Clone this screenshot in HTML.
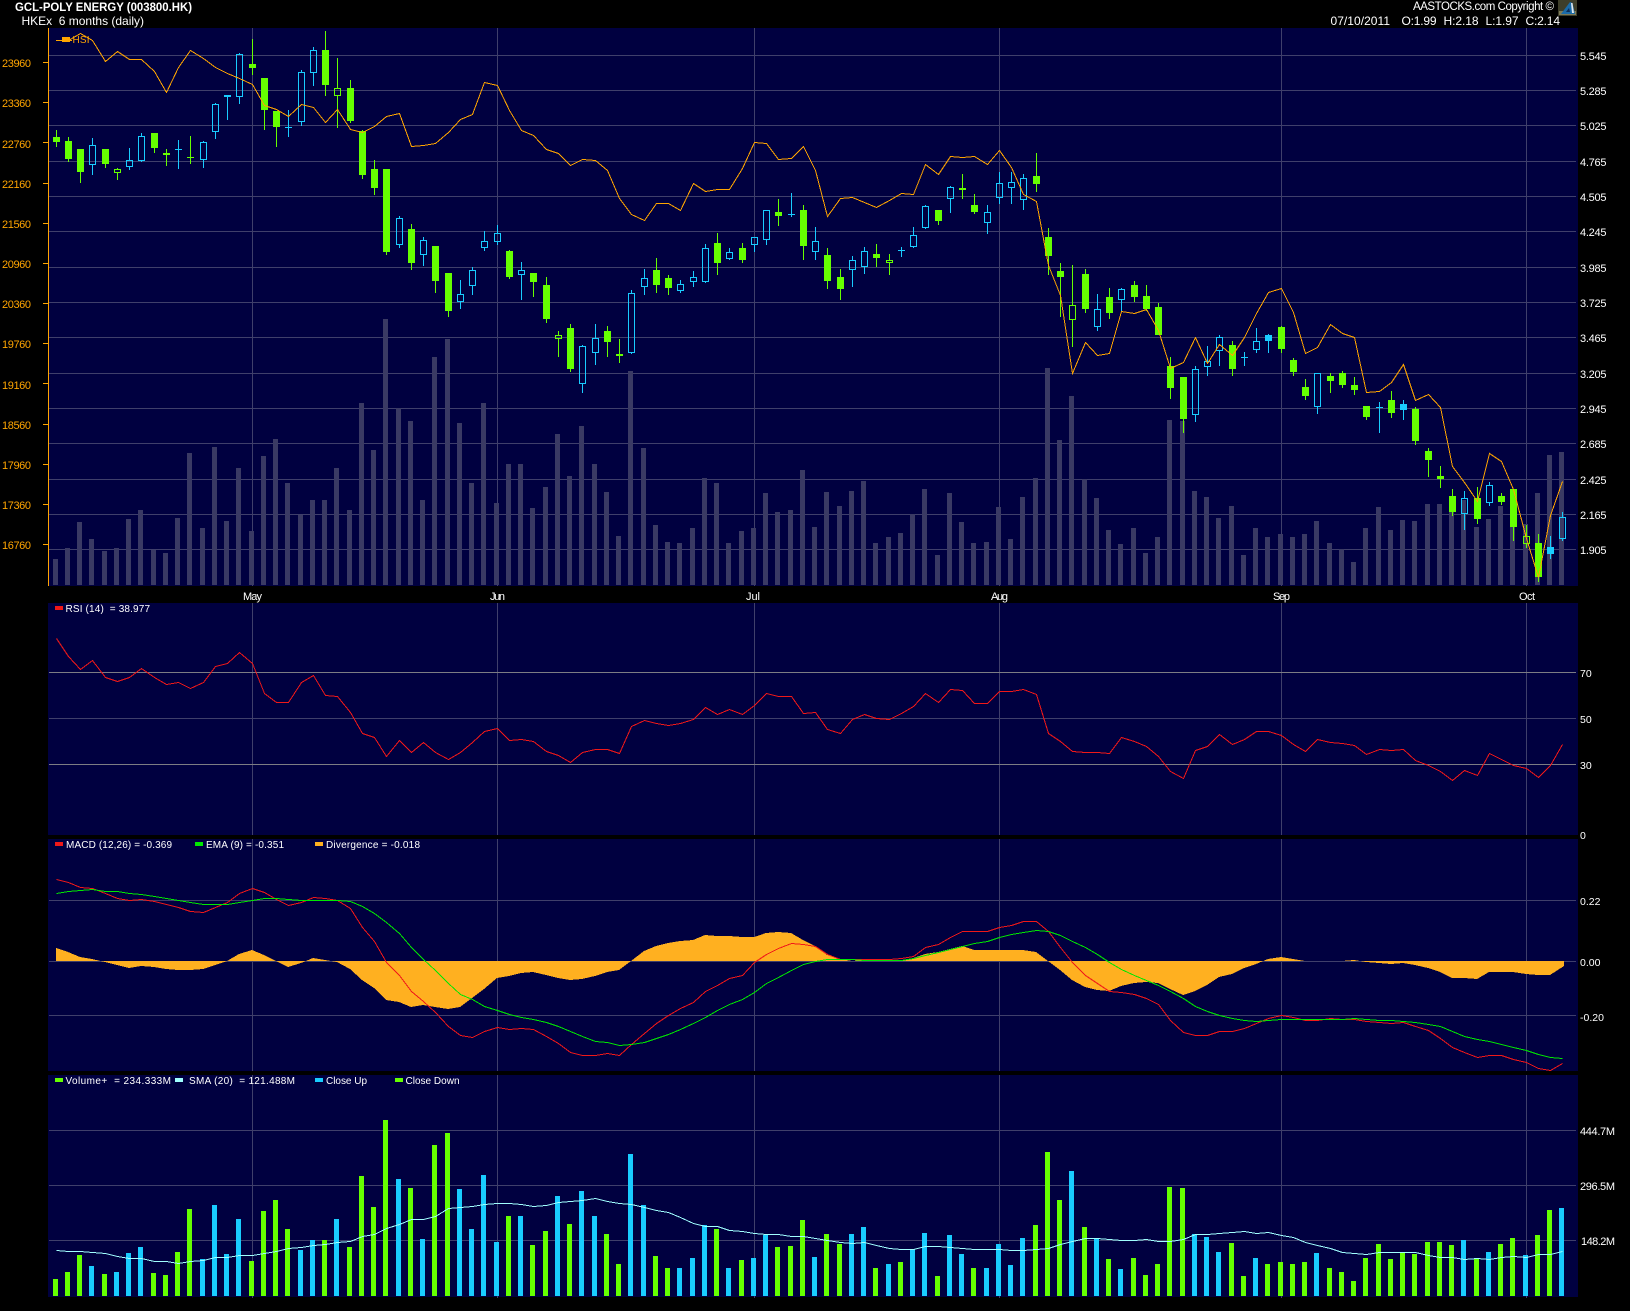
<!DOCTYPE html>
<html><head><meta charset="utf-8"><title>GCL-POLY ENERGY (003800.HK)</title>
<style>html,body{margin:0;padding:0;background:#000}svg{display:block}text{font-family:"Liberation Sans",sans-serif;font-size:11px;fill:#fff}.o text,text.o{fill:#ffa500}.l text{font-size:10px}</style></head><body>
<svg xmlns="http://www.w3.org/2000/svg" width="1630" height="1311" viewBox="0 0 1630 1311" shape-rendering="crispEdges">
<rect width="1630" height="1311" fill="#000"/>
<g fill="#000040"><rect x="48" y="28" width="1530" height="558"/><rect x="48" y="603" width="1530" height="232"/><rect x="48" y="839" width="1530" height="232"/><rect x="48" y="1075" width="1530" height="222"/></g>
<path fill="none" stroke="#3f3f6b" d="M49 55.5H1576M49 90.5H1576M49 125.5H1576M49 161.5H1576M49 196.5H1576M49 231.5H1576M49 267.5H1576M49 302.5H1576M49 337.5H1576M49 373.5H1576M49 408.5H1576M49 443.5H1576M49 479.5H1576M49 514.5H1576M49 549.5H1576M49 718.5H1576M49 900.5H1576M49 961.5H1576M49 1015.5H1576M49 1130.5H1576M49 1185.5H1576M49 1240.5H1576M252.5 28V586M497.5 28V586M754.5 28V586M999.5 28V586M1281.5 28V586M1526.5 28V586M252.5 603V835M497.5 603V835M754.5 603V835M999.5 603V835M1281.5 603V835M1526.5 603V835M252.5 839V1071M497.5 839V1071M754.5 839V1071M999.5 839V1071M1281.5 839V1071M1526.5 839V1071M252.5 1075V1298M497.5 1075V1298M754.5 1075V1298M999.5 1075V1298M1281.5 1075V1298M1526.5 1075V1298"/>
<path fill="none" stroke="#7c7c84" d="M49 672.5H1576M49 764.5H1576"/>
<path fill="none" stroke="#ffa500" d="M48.5 28V586M43 62.5H48M43 102.5H48M43 142.5H48M43 183.5H48M43 223.5H48M43 263.5H48M43 303.5H48M43 343.5H48M43 383.5H48M43 424.5H48M43 464.5H48M43 504.5H48M43 544.5H48"/>
<!-- background volume -->
<path fill="#3a3a64" d="M53 559h5V585h-5zM65 548h5V585h-5zM77 522h5V585h-5zM89 539h5V585h-5zM102 551h5V585h-5zM114 548h5V585h-5zM126 519h5V585h-5zM138 510h5V585h-5zM151 550h5V585h-5zM163 553h5V585h-5zM175 518h5V585h-5zM187 453h5V585h-5zM200 528h5V585h-5zM212 447h5V585h-5zM224 521h5V585h-5zM236 468h5V585h-5zM249 531h5V585h-5zM261 456h5V585h-5zM273 439h5V585h-5zM285 483h5V585h-5zM298 515h5V585h-5zM310 500h5V585h-5zM322 500h5V585h-5zM334 468h5V585h-5zM347 510h5V585h-5zM359 403h5V585h-5zM371 450h5V585h-5zM383 319h5V585h-5zM396 408h5V585h-5zM408 421h5V585h-5zM420 500h5V585h-5zM432 357h5V585h-5zM445 339h5V585h-5zM457 423h5V585h-5zM469 483h5V585h-5zM481 403h5V585h-5zM494 503h5V585h-5zM506 464h5V585h-5zM518 464h5V585h-5zM530 508h5V585h-5zM543 487h5V585h-5zM555 434h5V585h-5zM567 476h5V585h-5zM579 426h5V585h-5zM592 464h5V585h-5zM604 492h5V585h-5zM616 536h5V585h-5zM628 371h5V585h-5zM641 448h5V585h-5zM653 525h5V585h-5zM665 542h5V585h-5zM677 543h5V585h-5zM690 528h5V585h-5zM702 478h5V585h-5zM714 483h5V585h-5zM726 543h5V585h-5zM739 531h5V585h-5zM751 528h5V585h-5zM763 493h5V585h-5zM775 512h5V585h-5zM788 510h5V585h-5zM800 470h5V585h-5zM812 527h5V585h-5zM824 492h5V585h-5zM837 506h5V585h-5zM849 491h5V585h-5zM861 481h5V585h-5zM873 543h5V585h-5zM886 537h5V585h-5zM898 533h5V585h-5zM910 514h5V585h-5zM922 489h5V585h-5zM935 555h5V585h-5zM947 493h5V585h-5zM959 522h5V585h-5zM971 543h5V585h-5zM984 542h5V585h-5zM996 507h5V585h-5zM1008 539h5V585h-5zM1020 497h5V585h-5zM1033 478h5V585h-5zM1045 368h5V585h-5zM1057 440h5V585h-5zM1069 396h5V585h-5zM1082 479h5V585h-5zM1094 498h5V585h-5zM1106 530h5V585h-5zM1118 544h5V585h-5zM1131 528h5V585h-5zM1143 553h5V585h-5zM1155 537h5V585h-5zM1167 420h5V585h-5zM1180 421h5V585h-5zM1192 491h5V585h-5zM1204 497h5V585h-5zM1216 518h5V585h-5zM1229 506h5V585h-5zM1241 555h5V585h-5zM1253 528h5V585h-5zM1265 537h5V585h-5zM1278 534h5V585h-5zM1290 537h5V585h-5zM1302 534h5V585h-5zM1314 521h5V585h-5zM1327 543h5V585h-5zM1339 549h5V585h-5zM1351 562h5V585h-5zM1363 528h5V585h-5zM1376 507h5V585h-5zM1388 530h5V585h-5zM1400 520h5V585h-5zM1412 521h5V585h-5zM1425 504h5V585h-5zM1437 504h5V585h-5zM1449 512h5V585h-5zM1461 500h5V585h-5zM1474 527h5V585h-5zM1486 519h5V585h-5zM1498 506h5V585h-5zM1510 500h5V585h-5zM1523 524h5V585h-5zM1535 493h5V585h-5zM1547 455h5V585h-5zM1559 452h5V585h-5z"/>
<!-- wicks -->
<g transform="translate(.5 0)" fill="none">
<path stroke="#66ff00" d="M56 130V147M68 137V162M80 149V183M105 149V168M154 133V153M166 149V166M190 136V164M252 39V75M264 78V130M276 111V147M325 31V96M350 80V123M362 130V179M374 160V195M386 169V255M411 224V270M435 246V293M448 273V317M509 250V279M533 273V297M546 277V323M570 324V372M607 326V357M619 339V363M656 258V293M668 275V295M717 233V275M742 243V263M778 199V226M803 205V260M827 248V289M840 269V300M876 244V267M938 210V225M974 194V214M1036 153V192M1048 228V275M1060 263V317M1085 269V313M1109 288V319M1134 281V302M1146 285V311M1158 303V335M1170 357V399M1183 377V433M1232 341V376M1281 326V353M1293 358V376M1305 379V400M1330 373V393M1342 371V388M1354 377V395M1366 406V420M1391 391V418M1415 407V445M1428 448V477M1440 466V488M1452 489V516M1477 487V524M1501 493V505M1513 489V541M1538 534V582M117 168V169M117 173V180M337 58V88M337 96V128M558 331V335M558 339V357M889 254V260M889 263V275M962 174V188M962 190V199M1072 265V305M1072 320V347M1526 525V536M1526 544V548"/>
<path stroke="#19ccff" d="M92 138V145M92 165V175M129 148V160M129 167V170M141 133V136M141 161V162M203 141V142M203 160V168M215 103V104M215 132V139M227 97V120M239 53V54M239 97V104M301 70V72M301 122V126M313 47V50M313 73V86M399 216V218M399 245V248M423 237V240M423 255V266M460 280V294M460 302V309M472 267V270M472 286V295M484 231V241M484 248V251M497 225V233M497 242V245M521 262V270M521 275V300M582 345V346M582 384V393M595 324V338M595 353V365M631 290V293M631 353V354M644 269V278M644 287V295M680 280V284M680 291V293M693 271V277M693 282V287M705 244V248M705 282V283M729 248V252M729 259V260M754 245V252M766 240V245M815 227V241M815 252V260M852 256V260M852 270V287M864 247V251M864 267V274M913 227V235M913 247V248M925 205V206M925 228V229M950 186V187M950 199V213M987 205V212M987 223V234M999 172V183M999 198V204M1011 172V182M1011 188V204M1023 174V178M1023 200V210M1097 294V309M1097 327V331M1121 288V289M1121 300V311M1195 366V369M1195 415V422M1207 346V361M1207 367V376M1219 335V337M1219 351V366M1256 328V341M1256 350V353M1317 407V414M1464 491V498M1464 514V530M1489 482V485M1489 503V506M1562 512V517M1562 539V541M178 140V169M288 110V137M791 193V217M901 247V257M1244 352V366M1379 402V433M1268 334V353M1403 400V420M1550 536V559"/>
</g>
<!-- filled bodies -->
<path fill="#66ff00" d="M53 137h7v5h-7zM65 141h7v18h-7zM77 149h7v23h-7zM102 149h7v15h-7zM151 133h7v15h-7zM163 153h7v2h-7zM187 157h7v1h-7zM249 64h7v4h-7zM261 78h7v32h-7zM273 111h7v16h-7zM322 50h7v35h-7zM347 88h7v33h-7zM359 131h7v44h-7zM371 169h7v19h-7zM383 169h7v83h-7zM408 229h7v34h-7zM432 246h7v35h-7zM445 273h7v38h-7zM506 251h7v26h-7zM530 273h7v9h-7zM543 285h7v34h-7zM567 328h7v41h-7zM604 331h7v11h-7zM616 354h7v2h-7zM653 270h7v15h-7zM665 278h7v10h-7zM714 243h7v20h-7zM739 248h7v12h-7zM775 212h7v4h-7zM800 210h7v36h-7zM824 255h7v26h-7zM837 277h7v12h-7zM873 254h7v4h-7zM935 210h7v11h-7zM971 205h7v7h-7zM1033 176h7v8h-7zM1045 237h7v19h-7zM1057 271h7v6h-7zM1082 274h7v35h-7zM1106 297h7v16h-7zM1131 285h7v12h-7zM1143 296h7v13h-7zM1155 307h7v28h-7zM1167 366h7v22h-7zM1180 377h7v42h-7zM1229 345h7v24h-7zM1278 327h7v22h-7zM1290 360h7v12h-7zM1302 387h7v9h-7zM1327 376h7v5h-7zM1339 373h7v12h-7zM1351 385h7v5h-7zM1363 406h7v11h-7zM1388 400h7v13h-7zM1412 409h7v32h-7zM1425 451h7v9h-7zM1437 476h7v3h-7zM1449 496h7v16h-7zM1474 498h7v21h-7zM1498 496h7v6h-7zM1510 489h7v38h-7zM1535 543h7v34h-7z"/>
<path fill="#19ccff" d="M175 149h7v1h-7zM285 127h7v1h-7zM788 214h7v1h-7zM898 250h7v1h-7zM1241 357h7v1h-7zM1376 407h7v1h-7zM1265 335h7v6h-7zM1400 404h7v6h-7zM1547 547h7v7h-7z"/>
<!-- hollow bodies -->
<g transform="translate(.5 .5)" fill="none">
<path stroke="#66ff00" d="M114 169h6v3h-6zM334 88h6v7h-6zM555 335h6v3h-6zM886 260h6v2h-6zM959 188h6v1h-6zM1069 305h6v14h-6zM1523 536h6v7h-6z"/>
<path stroke="#19ccff" d="M89 145h6v19h-6zM126 160h6v6h-6zM138 136h6v24h-6zM200 142h6v17h-6zM212 104h6v27h-6zM224 95h6v1h-6zM236 54h6v42h-6zM298 72h6v49h-6zM310 50h6v22h-6zM396 218h6v26h-6zM420 240h6v14h-6zM457 294h6v7h-6zM469 270h6v15h-6zM481 241h6v6h-6zM494 233h6v8h-6zM518 270h6v4h-6zM579 346h6v37h-6zM592 338h6v14h-6zM628 293h6v59h-6zM641 278h6v8h-6zM677 284h6v6h-6zM690 277h6v4h-6zM702 248h6v33h-6zM726 252h6v6h-6zM751 237h6v7h-6zM763 210h6v29h-6zM812 241h6v10h-6zM849 260h6v9h-6zM861 251h6v15h-6zM910 235h6v11h-6zM922 206h6v21h-6zM947 187h6v11h-6zM984 212h6v10h-6zM996 183h6v14h-6zM1008 182h6v5h-6zM1020 178h6v21h-6zM1094 309h6v17h-6zM1118 289h6v10h-6zM1192 369h6v45h-6zM1204 361h6v5h-6zM1216 337h6v13h-6zM1253 341h6v8h-6zM1314 373h6v33h-6zM1461 498h6v15h-6zM1486 485h6v17h-6zM1559 517h6v21h-6z"/>
<!-- HSI line -->
<polyline stroke="#ffa500" points="56,40 68,40 80,33 92,40 105,61 117,51 129,59 141,59 154,71 166,92 178,67 190,50 203,58 215,67 227,73 239,78 252,84 264,105 276,109 288,116 301,104 313,107 325,122 337,109 350,129 362,132 374,126 386,116 399,113 411,146 423,145 435,143 448,132 460,119 472,114 484,82 497,85 509,110 521,130 533,135 546,149 558,153 570,165 582,159 595,160 607,170 619,198 631,214 644,220 656,203 668,203 680,210 693,183 705,191 717,189 729,189 742,168 754,142 766,143 778,159 791,158 803,146 815,170 827,216 840,198 852,197 864,202 876,207 889,200 901,193 913,194 925,164 938,174 950,156 962,157 974,156 987,164 999,150 1011,167 1023,194 1036,201 1048,265 1060,295 1072,373 1085,342 1097,355 1109,353 1121,311 1134,313 1146,309 1158,330 1170,368 1183,362 1195,337 1207,363 1219,344 1232,355 1244,337 1256,313 1268,292 1281,288 1293,312 1305,353 1317,347 1330,324 1342,333 1354,337 1366,392 1379,391 1391,382 1403,364 1415,400 1428,394 1440,407 1452,466 1464,482 1477,501 1489,453 1501,461 1513,489 1526,538 1538,577 1550,515 1562,481"/>
<!-- RSI line -->
<polyline stroke="#f01818" points="56,638 68,656 80,669 92,660 105,677 117,681 129,677 141,668 154,677 166,684 178,682 190,688 203,682 215,666 227,663 239,652 252,663 264,693 276,702 288,702 301,682 313,675 325,695 337,696 350,712 362,733 374,737 386,756 399,740 411,752 423,742 435,752 448,759 460,752 472,742 484,731 497,728 509,740 521,739 533,741 546,751 558,755 570,762 582,752 595,749 607,749 619,753 631,726 644,720 656,723 668,725 680,723 693,719 705,707 717,714 729,709 742,714 754,705 766,693 778,696 791,696 803,713 815,712 827,729 840,733 852,719 864,714 876,718 889,719 901,713 913,706 925,693 938,702 950,689 962,690 974,703 987,703 999,691 1011,691 1023,689 1036,694 1048,733 1060,741 1072,751 1085,752 1097,752 1109,753 1121,737 1134,741 1146,746 1158,756 1170,771 1183,778 1195,750 1207,746 1219,734 1232,744 1244,739 1256,731 1268,731 1281,735 1293,744 1305,751 1317,739 1330,742 1342,743 1354,745 1366,754 1379,749 1391,750 1403,749 1415,760 1428,765 1440,771 1452,780 1464,770 1477,775 1489,753 1501,759 1513,765 1526,768 1538,777 1550,765 1562,744"/>
</g>
<!-- divergence -->
<polygon fill="#ffb020" points="56,961 56,948 68,952 80,957 92,959 105,962 117,965 129,968 141,966 154,967 166,969 178,970 190,970 203,969 215,965 227,961 239,954 252,950 264,955 276,961 288,967 301,963 313,958 325,960 337,962 350,969 362,980 374,988 386,1000 399,1002 411,1007 423,1005 435,1007 448,1009 460,1007 472,998 484,989 497,978 509,976 521,973 533,972 546,975 558,978 570,980 582,979 595,976 607,972 619,970 631,961 644,951 656,946 668,943 680,941 693,940 705,935 717,936 729,936 742,937 754,937 766,933 778,932 791,933 803,940 815,946 827,955 840,959 852,961 864,960 876,961 889,961 901,961 913,958 925,954 938,952 950,949 962,946 974,950 987,950 999,950 1011,950 1023,950 1036,952 1048,961 1060,970 1072,980 1085,987 1097,990 1109,991 1121,986 1134,983 1146,982 1158,983 1170,989 1183,995 1195,991 1207,985 1219,977 1232,974 1244,968 1256,964 1268,959 1281,957 1293,959 1305,961 1317,961 1330,961 1342,961 1354,960 1366,962 1379,963 1391,964 1403,963 1415,965 1428,968 1440,972 1452,978 1464,978 1477,979 1489,972 1501,972 1513,972 1526,974 1538,975 1550,975 1564,966 1564,961"/>
<g transform="translate(.5 .5)" fill="none">
<!-- MACD -->
<polyline stroke="#f01818" points="56,879 68,882 80,887 92,888 105,893 117,898 129,900 141,899 154,901 166,904 178,907 190,911 203,912 215,907 227,902 239,893 252,888 264,892 276,899 288,905 301,902 313,897 325,898 337,900 350,908 362,927 374,941 386,962 399,975 411,991 423,1001 435,1012 448,1026 460,1035 472,1037 484,1031 497,1027 509,1029 521,1028 533,1029 546,1036 558,1043 570,1052 582,1055 595,1055 607,1053 619,1055 631,1044 644,1033 656,1023 668,1015 680,1008 693,1002 705,991 717,985 729,978 742,975 754,962 766,954 778,948 791,943 803,944 815,946 827,954 840,959 852,959 864,959 876,959 889,959 901,958 913,956 925,947 938,944 950,937 962,931 974,931 987,931 999,927 1011,925 1023,921 1036,921 1048,931 1060,947 1072,962 1085,975 1097,983 1109,991 1121,992 1134,994 1146,998 1158,1004 1170,1020 1183,1032 1195,1035 1207,1035 1219,1031 1232,1031 1244,1028 1256,1023 1268,1018 1281,1015 1293,1017 1305,1020 1317,1020 1330,1018 1342,1019 1354,1019 1366,1021 1379,1022 1391,1023 1403,1022 1415,1026 1428,1030 1440,1038 1452,1047 1464,1052 1477,1057 1489,1055 1501,1055 1513,1059 1526,1062 1538,1068 1550,1070 1562,1063"/>
<polyline stroke="#00e800" points="56,893 68,891 80,890 92,889 105,891 117,891 129,893 141,894 154,896 166,898 178,900 190,902 203,904 215,904 227,904 239,902 252,900 264,898 276,898 288,899 301,900 313,900 325,900 337,900 350,901 362,906 374,913 386,922 399,933 411,947 423,959 435,970 448,983 460,994 472,999 484,1006 497,1010 509,1014 521,1017 533,1019 546,1022 558,1026 570,1031 582,1036 595,1041 607,1042 619,1045 631,1044 644,1042 656,1038 668,1034 680,1029 693,1023 705,1017 717,1010 729,1004 742,999 754,992 766,983 778,977 791,970 803,964 815,961 827,959 840,959 852,959 864,960 876,960 889,960 901,960 913,958 925,955 938,952 950,949 962,946 974,943 987,941 999,937 1011,934 1023,932 1036,930 1048,931 1060,935 1072,941 1085,947 1097,954 1109,962 1121,969 1134,975 1146,980 1158,985 1170,991 1183,998 1195,1006 1207,1011 1219,1015 1232,1018 1244,1020 1256,1021 1268,1020 1281,1019 1293,1019 1305,1019 1317,1019 1330,1019 1342,1019 1354,1018 1366,1019 1379,1020 1391,1020 1403,1021 1415,1022 1428,1024 1440,1026 1452,1031 1464,1036 1477,1039 1489,1041 1501,1044 1513,1047 1526,1050 1538,1054 1550,1057 1562,1058"/>
</g>
<!-- volume -->
<path fill="#66ff00" d="M53 1279h5V1296h-5zM65 1272h5V1296h-5zM77 1255h5V1296h-5zM102 1274h5V1296h-5zM151 1273h5V1296h-5zM163 1275h5V1296h-5zM175 1252h5V1296h-5zM187 1209h5V1296h-5zM249 1261h5V1296h-5zM261 1211h5V1296h-5zM273 1200h5V1296h-5zM285 1229h5V1296h-5zM322 1240h5V1296h-5zM347 1247h5V1296h-5zM359 1176h5V1296h-5zM371 1207h5V1296h-5zM383 1120h5V1296h-5zM408 1188h5V1296h-5zM432 1145h5V1296h-5zM445 1133h5V1296h-5zM506 1216h5V1296h-5zM530 1245h5V1296h-5zM543 1231h5V1296h-5zM567 1224h5V1296h-5zM604 1234h5V1296h-5zM616 1264h5V1296h-5zM653 1256h5V1296h-5zM665 1268h5V1296h-5zM714 1229h5V1296h-5zM739 1260h5V1296h-5zM775 1247h5V1296h-5zM788 1246h5V1296h-5zM800 1220h5V1296h-5zM824 1234h5V1296h-5zM837 1244h5V1296h-5zM873 1268h5V1296h-5zM898 1262h5V1296h-5zM935 1276h5V1296h-5zM971 1268h5V1296h-5zM1033 1225h5V1296h-5zM1045 1152h5V1296h-5zM1057 1200h5V1296h-5zM1082 1227h5V1296h-5zM1106 1259h5V1296h-5zM1131 1258h5V1296h-5zM1143 1275h5V1296h-5zM1155 1264h5V1296h-5zM1167 1187h5V1296h-5zM1180 1188h5V1296h-5zM1229 1243h5V1296h-5zM1241 1276h5V1296h-5zM1265 1264h5V1296h-5zM1278 1262h5V1296h-5zM1290 1264h5V1296h-5zM1302 1262h5V1296h-5zM1327 1268h5V1296h-5zM1339 1272h5V1296h-5zM1351 1281h5V1296h-5zM1363 1258h5V1296h-5zM1376 1244h5V1296h-5zM1388 1259h5V1296h-5zM1400 1253h5V1296h-5zM1412 1254h5V1296h-5zM1425 1242h5V1296h-5zM1437 1242h5V1296h-5zM1449 1245h5V1296h-5zM1474 1258h5V1296h-5zM1498 1244h5V1296h-5zM1510 1238h5V1296h-5zM1535 1235h5V1296h-5zM1547 1210h5V1296h-5z"/>
<path fill="#19ccff" d="M89 1266h5V1296h-5zM114 1272h5V1296h-5zM126 1253h5V1296h-5zM138 1247h5V1296h-5zM200 1259h5V1296h-5zM212 1205h5V1296h-5zM224 1254h5V1296h-5zM236 1219h5V1296h-5zM298 1250h5V1296h-5zM310 1240h5V1296h-5zM334 1219h5V1296h-5zM396 1179h5V1296h-5zM420 1239h5V1296h-5zM457 1189h5V1296h-5zM469 1229h5V1296h-5zM481 1175h5V1296h-5zM494 1242h5V1296h-5zM518 1216h5V1296h-5zM555 1196h5V1296h-5zM579 1191h5V1296h-5zM592 1216h5V1296h-5zM628 1154h5V1296h-5zM641 1205h5V1296h-5zM677 1268h5V1296h-5zM690 1258h5V1296h-5zM702 1225h5V1296h-5zM726 1268h5V1296h-5zM751 1258h5V1296h-5zM763 1235h5V1296h-5zM812 1257h5V1296h-5zM849 1234h5V1296h-5zM861 1227h5V1296h-5zM886 1264h5V1296h-5zM910 1249h5V1296h-5zM922 1233h5V1296h-5zM947 1235h5V1296h-5zM959 1254h5V1296h-5zM984 1268h5V1296h-5zM996 1244h5V1296h-5zM1008 1265h5V1296h-5zM1020 1238h5V1296h-5zM1069 1171h5V1296h-5zM1094 1238h5V1296h-5zM1118 1269h5V1296h-5zM1192 1234h5V1296h-5zM1204 1237h5V1296h-5zM1216 1252h5V1296h-5zM1253 1258h5V1296h-5zM1314 1253h5V1296h-5zM1461 1240h5V1296h-5zM1486 1252h5V1296h-5zM1523 1255h5V1296h-5zM1559 1208h5V1296h-5z"/>
<g transform="translate(.5 .5)" fill="none">
<polyline stroke="#a0ffff" points="56,1250 68,1251 80,1251 92,1252 105,1253 117,1256 129,1258 141,1258 154,1261 166,1261 178,1263 190,1261 203,1260 215,1257 227,1257 239,1255 252,1255 264,1253 276,1251 288,1248 301,1247 313,1245 325,1244 337,1242 350,1241 362,1236 374,1234 386,1228 399,1224 411,1219 423,1219 435,1216 448,1208 460,1207 472,1206 484,1204 497,1203 509,1203 521,1204 533,1206 546,1205 558,1202 570,1201 582,1200 595,1198 607,1201 619,1203 631,1204 644,1207 656,1210 668,1212 680,1217 693,1223 705,1226 717,1226 729,1230 742,1231 754,1233 766,1234 778,1234 791,1236 803,1236 815,1238 827,1240 840,1242 852,1243 864,1242 876,1245 889,1248 901,1249 913,1249 925,1246 938,1246 950,1247 962,1248 974,1249 987,1249 999,1249 1011,1250 1023,1250 1036,1249 1048,1248 1060,1244 1072,1241 1085,1238 1097,1238 1109,1239 1121,1240 1134,1240 1146,1239 1158,1241 1170,1241 1183,1239 1195,1234 1207,1234 1219,1233 1232,1232 1244,1231 1256,1233 1268,1232 1281,1235 1293,1237 1305,1242 1317,1245 1330,1248 1342,1252 1354,1253 1366,1254 1379,1252 1391,1252 1403,1252 1415,1252 1428,1255 1440,1257 1452,1257 1464,1259 1477,1258 1489,1259 1501,1257 1513,1256 1526,1257 1538,1254 1550,1254 1562,1251"/>
</g>
<!-- logo -->
<g shape-rendering="geometricPrecision">
<rect x="1558" y="0" width="19" height="16" fill="#3e3e2a"/>
<rect x="1559" y="11" width="17" height="4" fill="#7d7a58"/>
<path fill="#1a6aa8" d="M1570 2L1561 14H1575L1572.5 3z"/>
<path fill="#0c2c58" d="M1569 8L1566 12H1570z"/>
<path fill="#dfe8ee" d="M1571 3L1572 13H1574L1572.5 3z"/>
</g>
<g>
<text x="15" y="11" font-weight="bold" style="font-size:12px" textLength="177" lengthAdjust="spacingAndGlyphs">GCL-POLY ENERGY (003800.HK)</text>
<text x="21.5" y="25" style="font-size:12px" textLength="122.5" xml:space="preserve">HKEx  6 months (daily)</text>
<text x="1413" y="10" style="font-size:11.5px" textLength="141">AASTOCKS.com Copyright ©</text>
<text x="1330.5" y="25" style="font-size:12px" textLength="59.5">07/10/2011</text>
<text x="1401.5" y="25" style="font-size:12px" textLength="35">O:1.99</text>
<text x="1443.5" y="25" style="font-size:12px" textLength="35">H:2.18</text>
<text x="1485.5" y="25" style="font-size:12px" textLength="33">L:1.97</text>
<text x="1525.5" y="25" style="font-size:12px" textLength="34.5">C:2.14</text>
<g class="o" fill="#ffa500">
<text x="2" y="67" textLength="29">23960</text><text x="2" y="107" textLength="29">23360</text><text x="2" y="148" textLength="29">22760</text><text x="2" y="188" textLength="29">22160</text><text x="2" y="228" textLength="29">21560</text><text x="2" y="268" textLength="29">20960</text><text x="2" y="308" textLength="29">20360</text><text x="2" y="348" textLength="29">19760</text><text x="2" y="389" textLength="29">19160</text><text x="2" y="429" textLength="29">18560</text><text x="2" y="469" textLength="29">17960</text><text x="2" y="509" textLength="29">17360</text><text x="2" y="549" textLength="29">16760</text>
</g>
<text x="1580" y="60" textLength="26.5">5.545</text><text x="1580" y="95" textLength="26.5">5.285</text><text x="1580" y="130" textLength="26.5">5.025</text><text x="1580" y="166" textLength="26.5">4.765</text><text x="1580" y="201" textLength="26.5">4.505</text><text x="1580" y="236" textLength="26.5">4.245</text><text x="1580" y="272" textLength="26.5">3.985</text><text x="1580" y="307" textLength="26.5">3.725</text><text x="1580" y="342" textLength="26.5">3.465</text><text x="1580" y="378" textLength="26.5">3.205</text><text x="1580" y="413" textLength="26.5">2.945</text><text x="1580" y="448" textLength="26.5">2.685</text><text x="1580" y="484" textLength="26.5">2.425</text><text x="1580" y="519" textLength="26.5">2.165</text><text x="1580" y="554" textLength="26.5">1.905</text>
<text x="1580" y="677" style="font-size:10.5px">70</text><text x="1580" y="723" style="font-size:10.5px">50</text><text x="1580" y="769" style="font-size:10.5px">30</text><text x="1580" y="839" style="font-size:10.5px">0</text>
<text x="1580" y="905" style="font-size:10.5px">0.22</text><text x="1580" y="966" style="font-size:10.5px">0.00</text><text x="1580" y="1021" style="font-size:10.5px">-0.20</text>
<text x="1580" y="1135" textLength="35">444.7M</text><text x="1580" y="1190" textLength="35">296.5M</text><text x="1581" y="1245" textLength="34">148.2M</text>
<text x="243" y="600" textLength="19">May</text><text x="490" y="600" textLength="15">Jun</text><text x="746" y="600" textLength="14">Jul</text><text x="991" y="600" textLength="17">Aug</text><text x="1273" y="600" textLength="17">Sep</text><text x="1519" y="600" textLength="16">Oct</text>
<g class="l">
<path fill="none" stroke="#ffa500" d="M56 40.5H72"/><rect x="62" y="37" width="8" height="5" fill="#ffa500"/>
<text x="72.5" y="43" textLength="17" style="fill:#ffa500">HSI</text>
<rect x="55" y="606" width="8" height="4" fill="#f01818"/><text x="65.5" y="612" textLength="84.5" xml:space="preserve">RSI (14)  = 38.977</text>
<rect x="55" y="842" width="8" height="4" fill="#f01818"/><text x="66" y="848" textLength="106">MACD (12,26) = -0.369</text>
<rect x="195" y="842" width="8" height="4" fill="#00e800"/><text x="206" y="848" textLength="78">EMA (9) = -0.351</text>
<rect x="315" y="842" width="8" height="4" fill="#ffb020"/><text x="326" y="848" textLength="94">Divergence = -0.018</text>
<rect x="55" y="1078" width="8" height="4" fill="#66ff00"/><text x="65.5" y="1084" textLength="105.5" xml:space="preserve">Volume+  = 234.333M</text>
<rect x="175" y="1078" width="8" height="4" fill="#a0ffff"/><text x="189" y="1084" textLength="106" xml:space="preserve">SMA (20)  = 121.488M</text>
<rect x="315" y="1078" width="8" height="4" fill="#19ccff"/><text x="326" y="1084" textLength="41">Close Up</text>
<rect x="395" y="1078" width="8" height="4" fill="#66ff00"/><text x="405.5" y="1084" textLength="54">Close Down</text>
</g>
</g>
</svg>
</body></html>
